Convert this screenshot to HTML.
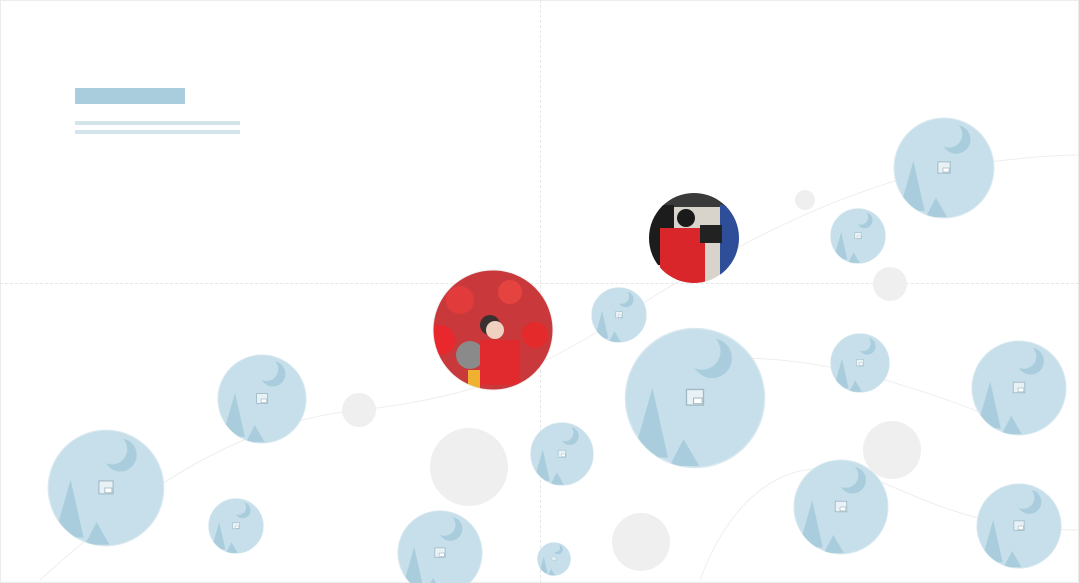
<!DOCTYPE html>
<html><head><meta charset="utf-8"><style>
html,body{margin:0;padding:0;background:#fff}
body{width:1079px;height:583px;position:relative;overflow:hidden;font-family:"Liberation Sans",sans-serif}
.frame{position:absolute;left:0;top:0;width:1077px;height:581px;border:1px solid #ececec}
.vl{position:absolute;left:540px;top:0;width:0;height:583px;border-left:1px dashed #e6e6e6}
.hl{position:absolute;left:0;top:283px;width:1079px;height:0;border-top:1px dashed #e6e6e6}
.b1{position:absolute;left:75px;top:88px;width:110px;height:16px;background:#a9cddd}
.b2{position:absolute;left:75px;top:121px;width:165px;height:4px;background:#d3e4ea}
.b3{position:absolute;left:75px;top:130px;width:165px;height:4px;background:#d3e4ea}
svg{position:absolute;left:0;top:0}
</style></head><body>
<div class="frame"></div><div class="vl"></div><div class="hl"></div>
<div class="b1"></div><div class="b2"></div><div class="b3"></div>
<svg width="1079" height="583" viewBox="0 0 1079 583">
<defs>
<symbol id="ph" viewBox="-50 -50 100 100">
<circle r="49" fill="#c6dfea" stroke="#d9e9ef" stroke-width="1"/>
<clipPath id="cc"><circle r="49"/></clipPath>
<g clip-path="url(#cc)" fill="#a9cddd">
<path d="M-30,-7 L-19,42 L-44,42 Z"/>
<path d="M-8,29 L3,48 L-18,48 Z"/>
</g>
<circle cx="12" cy="-28" r="14" fill="#a9cddd"/>
<circle cx="5" cy="-33" r="13" fill="#c6dfea"/>
<rect x="-6" y="-6" width="12" height="11" fill="#e8f1f5" stroke="#9fb8c4" stroke-width="0.9"/>
<rect x="-1" y="0" width="6" height="4" fill="#fff" stroke="#9fb8c4" stroke-width="0.7"/>
</symbol>
<clipPath id="p1"><circle cx="493" cy="330" r="60"/></clipPath>
<clipPath id="p2"><circle cx="694" cy="238" r="45"/></clipPath>
</defs>
<g fill="none" stroke="#eeeeee" stroke-width="1">
<path d="M40,580 C150,480 250,420 360,410 C450,400 520,380 600,330 C680,280 800,200 944,168 C1000,160 1050,155 1079,155"/>
<path d="M700,580 C730,500 780,460 841,470 C900,480 950,530 1079,530"/>
<path d="M700,360 C800,350 900,380 1000,420"/>
</g>
<g fill="#efefef">
<circle cx="805" cy="200" r="10"/><circle cx="890" cy="284" r="17"/>
<circle cx="359" cy="410" r="17"/><circle cx="469" cy="467" r="39"/>
<circle cx="892" cy="450" r="29"/><circle cx="641" cy="542" r="29"/>
</g>
<use href="#ph" x="893" y="117" width="102" height="102"/>
<use href="#ph" x="830" y="208" width="56" height="56"/>
<use href="#ph" x="591" y="287" width="56" height="56"/>
<use href="#ph" x="624" y="327" width="142" height="142"/>
<use href="#ph" x="830" y="333" width="60" height="60"/>
<use href="#ph" x="971" y="340" width="96" height="96"/>
<use href="#ph" x="217" y="354" width="90" height="90"/>
<use href="#ph" x="47" y="429" width="118" height="118"/>
<use href="#ph" x="208" y="498" width="56" height="56"/>
<use href="#ph" x="530" y="422" width="64" height="64"/>
<use href="#ph" x="397" y="510" width="86" height="86"/>
<use href="#ph" x="793" y="459" width="96" height="96"/>
<use href="#ph" x="976" y="483" width="86" height="86"/>
<use href="#ph" x="537" y="542" width="34" height="34"/>
<g clip-path="url(#p1)">
<rect x="430" y="268" width="126" height="124" fill="#c9383a"/>
<circle cx="460" cy="300" r="14" fill="#e23b3b"/><circle cx="510" cy="292" r="12" fill="#e5433f"/>
<circle cx="440" cy="340" r="15" fill="#e8282c"/><circle cx="535" cy="335" r="13" fill="#e52a2c"/>
<circle cx="490" cy="325" r="10" fill="#3a3030"/><circle cx="470" cy="355" r="14" fill="#8a8a8a"/>
<rect x="480" y="340" width="40" height="45" fill="#e12a2e"/><circle cx="495" cy="330" r="9" fill="#f0d0c0"/>
<rect x="468" y="370" width="12" height="20" fill="#f0b030"/>
</g>
<circle cx="493" cy="330" r="60" fill="none" stroke="#eee"/>
<g clip-path="url(#p2)">
<rect x="649" y="193" width="90" height="90" fill="#d8d4cc"/>
<rect x="649" y="193" width="90" height="14" fill="#3a3a3a"/>
<rect x="720" y="205" width="19" height="70" fill="#2e4e9a"/>
<rect x="649" y="205" width="25" height="60" fill="#1c1c1c"/>
<circle cx="686" cy="218" r="9" fill="#1a1a1a"/>
<rect x="660" y="228" width="45" height="55" fill="#d8262a"/>
<rect x="700" y="225" width="22" height="18" fill="#222"/>
</g>
</svg>
</body></html>
